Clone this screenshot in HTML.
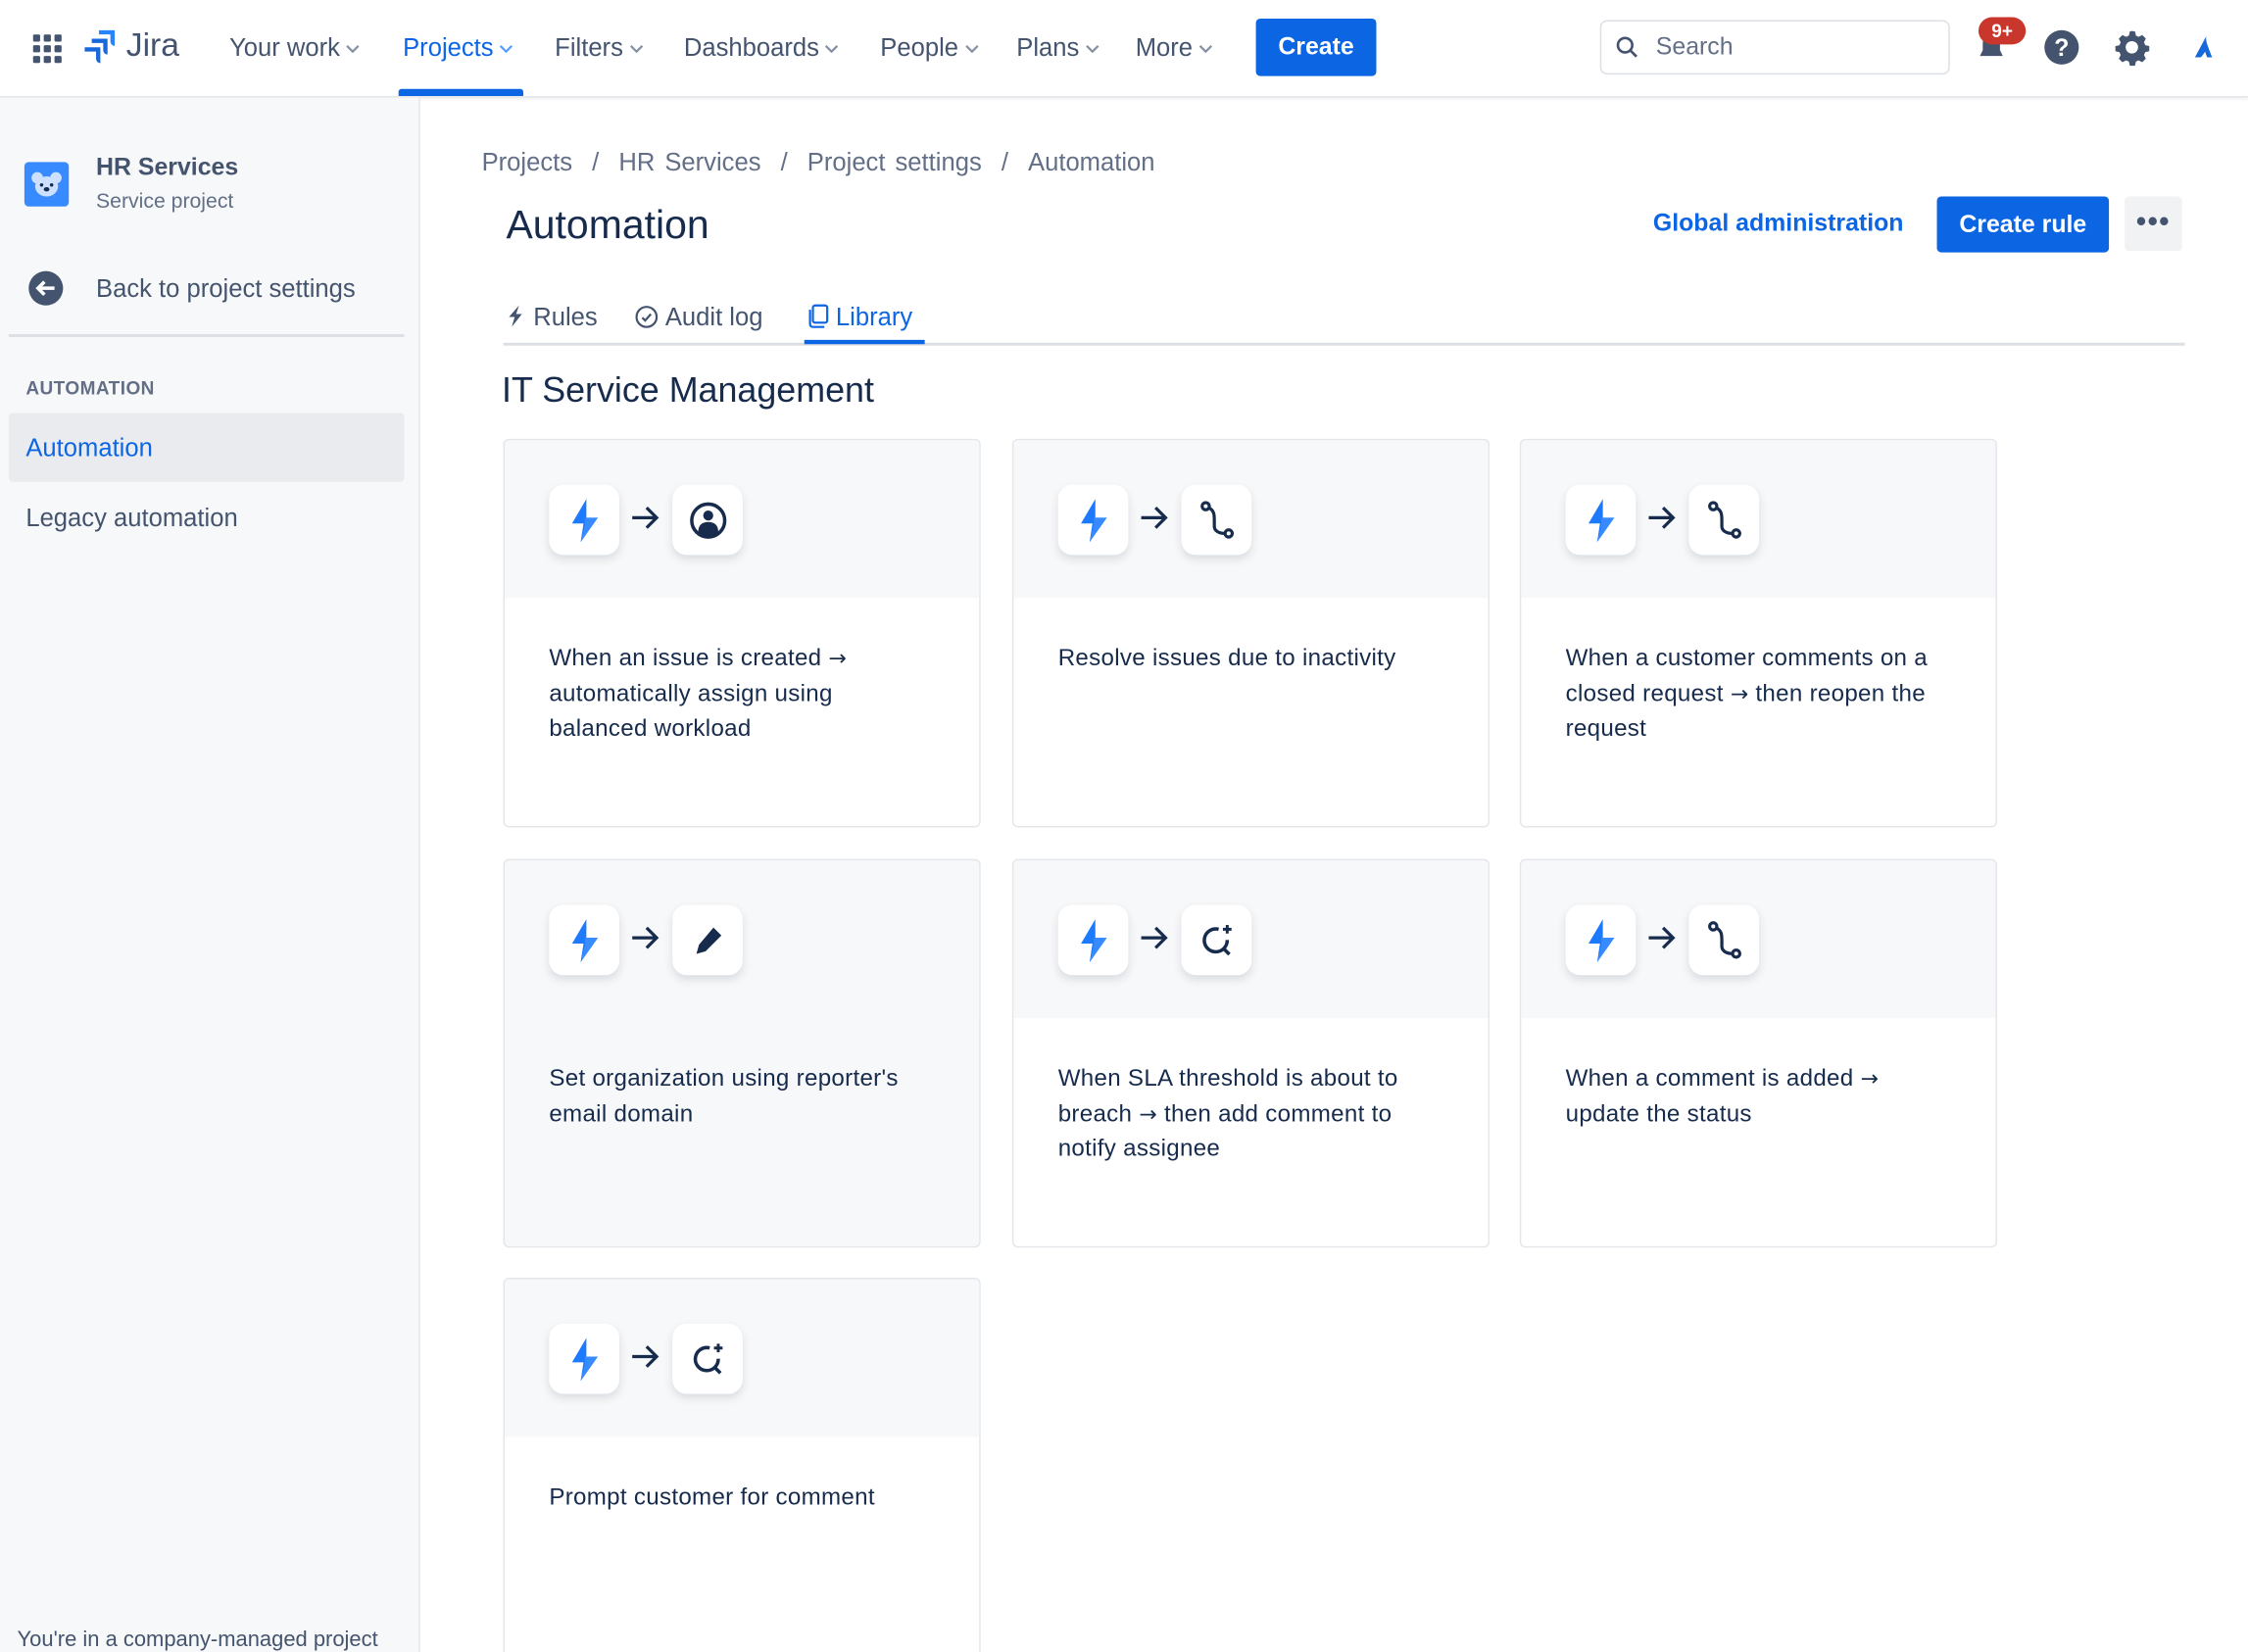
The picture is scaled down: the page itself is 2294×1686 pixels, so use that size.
<!DOCTYPE html>
<html><head><meta charset="utf-8"><style>
html,body{margin:0;padding:0;overflow:hidden;background:#fff}
#w{width:1568px;height:1152px;transform:scale(1.46301,1.46354);transform-origin:0 0;position:relative;font-family:"Liberation Sans",sans-serif;color:#172b4d}
.a{position:absolute}
.nav{top:0;left:0;width:1568px;height:67px;border-bottom:1px solid #e4e6ea;background:#fff;box-shadow:0 1px 2px rgba(9,30,66,.08)}
.ni{position:absolute;top:23px;font-size:17.5px;color:#44546f}
.ni svg{vertical-align:middle;margin-left:4px}
.side{top:68px;left:0;width:292px;height:1084px;background:#f7f8f9;border-right:1px solid #e4e6ea}
.card{position:absolute;width:331px;height:269px;border:1.5px solid #e4e6ea;border-radius:4px;background:#fff;overflow:hidden}
.card .top{height:110px;background:#f7f8f9;position:relative}
.ib{position:absolute;top:31px;width:49px;height:49px;background:#fff;border-radius:10px;box-shadow:0 3px 6px rgba(9,30,66,.12);display:flex;align-items:center;justify-content:center}
.arr{position:absolute;top:45px;left:88px}
.card p{margin:30px 0 0 31px;font-size:16.5px;line-height:24.5px;width:266px;letter-spacing:.2px;color:#172b4d}
.r{font-family:"DejaVu Sans",sans-serif;font-size:15px}
</style></head><body><div id="w">
<div class="a nav">
 <svg class="a" style="left:23px;top:24px" width="20" height="20" viewBox="0 0 20 20" fill="#44546f"><rect x="0" y="0" width="5" height="5" rx="1"/><rect x="7.5" y="0" width="5" height="5" rx="1"/><rect x="15" y="0" width="5" height="5" rx="1"/><rect x="0" y="7.5" width="5" height="5" rx="1"/><rect x="7.5" y="7.5" width="5" height="5" rx="1"/><rect x="15" y="7.5" width="5" height="5" rx="1"/><rect x="0" y="15" width="5" height="5" rx="1"/><rect x="7.5" y="15" width="5" height="5" rx="1"/><rect x="15" y="15" width="5" height="5" rx="1"/></svg>
 <svg class="a" style="left:59px;top:21px" width="22" height="24" viewBox="0 0 22 24"><path d="M10 0h11v11a3 3 0 0 1-3-3V3h-8z" fill="#2684ff"/><path d="M5 6h11v11a3 3 0 0 1-3-3V9H5z" fill="#1868db"/><path d="M0 12h11v11a3 3 0 0 1-3-3v-5H0z" fill="#1868db"/></svg>
 <div class="a" style="left:88px;top:18px;font-size:23px;color:#44546f">Jira</div>
 <div class="ni" style="left:160px">Your work<svg width="10" height="6"><path d="M1 1l4 4 4-4" stroke="#8590a2" fill="none" stroke-width="1.5"/></svg></div>
 <div class="ni" style="left:281px;color:#0c66e4">Projects<svg width="10" height="6"><path d="M1 1l4 4 4-4" stroke="#579dff" fill="none" stroke-width="1.5"/></svg></div>
 <div class="a" style="left:278px;top:62px;width:87px;height:5px;background:#0c66e4;border-radius:2px 2px 0 0"></div>
 <div class="ni" style="left:387px">Filters<svg width="10" height="6"><path d="M1 1l4 4 4-4" stroke="#8590a2" fill="none" stroke-width="1.5"/></svg></div>
 <div class="ni" style="left:477px">Dashboards<svg width="10" height="6"><path d="M1 1l4 4 4-4" stroke="#8590a2" fill="none" stroke-width="1.5"/></svg></div>
 <div class="ni" style="left:614px">People<svg width="10" height="6"><path d="M1 1l4 4 4-4" stroke="#8590a2" fill="none" stroke-width="1.5"/></svg></div>
 <div class="ni" style="left:709px">Plans<svg width="10" height="6"><path d="M1 1l4 4 4-4" stroke="#8590a2" fill="none" stroke-width="1.5"/></svg></div>
 <div class="ni" style="left:792px">More<svg width="10" height="6"><path d="M1 1l4 4 4-4" stroke="#8590a2" fill="none" stroke-width="1.5"/></svg></div>
 <div class="a" style="left:876px;top:13px;width:84px;height:40px;background:#0c66e4;border-radius:3px;color:#fff;font-size:17px;font-weight:bold;text-align:center;line-height:40px">Create</div>
 <div class="a" style="left:1116px;top:14px;width:242px;height:36px;border:1.5px solid #dcdfe4;border-radius:5px"></div>
 <svg class="a" style="left:1127px;top:25px" width="16" height="16"><circle cx="6.5" cy="6.5" r="5" stroke="#44546f" stroke-width="1.8" fill="none"/><path d="M10.5 10.5l4 4" stroke="#44546f" stroke-width="1.8"/></svg>
 <div class="a" style="left:1155px;top:23px;font-size:17px;color:#626f86">Search</div>
 <svg class="a" style="left:1378px;top:22px" width="22" height="24" viewBox="0 0 22 24"><path d="M11 2a6 6 0 0 0-6 6v5l-2 4h16l-2-4V8a6 6 0 0 0-6-6z" fill="#44546f"/></svg>
 <div class="a" style="left:1380px;top:12px;width:33px;height:19px;background:#c9372c;border-radius:10px;color:#fff;font-size:13px;font-weight:bold;text-align:center;line-height:19px">9+</div>
 <svg class="a" style="left:1425px;top:20px" width="26" height="26"><circle cx="13" cy="13" r="12" fill="#44546f"/><text x="13" y="19" font-size="17" font-weight="bold" fill="#fff" text-anchor="middle" font-family="Liberation Sans">?</text></svg>
 <svg class="a" style="left:1474px;top:20px" width="26" height="26" viewBox="0 0 24 24"><path d="M12 1.5l2 .3.6 2.6 1.7.9 2.4-1.2 2.3 2.3-1.2 2.4.8 1.8 2.6.6v3.3l-2.6.6-.8 1.8 1.2 2.4-2.3 2.3-2.4-1.2-1.7.8-.6 2.7h-3.3l-.6-2.7-1.8-.8-2.4 1.2-2.3-2.3 1.2-2.4-.8-1.8-2.6-.6v-3.3l2.6-.6.8-1.8-1.2-2.4 2.3-2.3 2.4 1.2 1.8-.9.6-2.6z" fill="#44546f"/><circle cx="12" cy="12" r="4" fill="#fff"/></svg>
 <svg class="a" style="left:1530px;top:24px" width="18" height="18" viewBox="0 0 18 18"><path d="M9 1c-1 3 1 7 4 15H9.5L8 12c-1 2-2 3-3 4H1z" fill="#1868db"/></svg>
</div>
<div class="a side">
 <div class="a" style="left:17px;top:45px;width:31px;height:31px;background:#388bff;border-radius:3px"><svg width="31" height="31"><circle cx="9" cy="11" r="4" fill="#cce0ff"/><circle cx="22" cy="11" r="4" fill="#cce0ff"/><ellipse cx="15.5" cy="17" rx="8" ry="7" fill="#cce0ff"/><circle cx="12" cy="16" r="1.2" fill="#172b4d"/><circle cx="19" cy="16" r="1.2" fill="#172b4d"/><ellipse cx="15.5" cy="19" rx="2" ry="1.5" fill="#172b4d"/></svg></div>
 <div class="a" style="left:67px;top:39px;font-size:17px;font-weight:bold;color:#44546f">HR Services</div>
 <div class="a" style="left:67px;top:65px;font-size:14.5px;color:#626f86">Service project</div>
 <svg class="a" style="left:19px;top:120px" width="26" height="26"><circle cx="13" cy="13" r="12" fill="#44546f"/><path d="M19 13H8M12 8.5L7.5 13l4.5 4.5" stroke="#fff" stroke-width="2.4" fill="none"/></svg>
 <div class="a" style="left:67px;top:123px;font-size:17.5px;color:#44546f">Back to project settings</div>
 <div class="a" style="left:6px;top:165px;width:276px;height:2px;background:#dcdfe4"></div>
 <div class="a" style="left:18px;top:195px;font-size:13px;font-weight:bold;color:#626f86;letter-spacing:.3px">AUTOMATION</div>
 <div class="a" style="left:6px;top:220px;width:276px;height:48px;background:#e9ebee;border-radius:3px"></div>
 <div class="a" style="left:18px;top:234px;font-size:17.5px;color:#0c66e4">Automation</div>
 <div class="a" style="left:18px;top:283px;font-size:17.5px;color:#44546f">Legacy automation</div>
 <div class="a" style="left:12px;top:1067px;font-size:15px;color:#44546f">You're in a company-managed project</div>
</div>
<div class="a" style="left:336px;top:103px;font-size:17.5px;color:#626f86;word-spacing:2px">Projects &nbsp;/ &nbsp;HR Services &nbsp;/ &nbsp;Project settings &nbsp;/ &nbsp;Automation</div>
<div class="a" style="left:353px;top:141px;font-size:28px;color:#172b4d">Automation</div>
<div class="a" style="left:1153px;top:146px;font-size:17px;font-weight:bold;color:#0c66e4">Global administration</div>
<div class="a" style="left:1351px;top:137px;width:120px;height:39px;background:#0c66e4;border-radius:3px;color:#fff;font-size:17px;font-weight:bold;text-align:center;line-height:39px">Create rule</div>
<div class="a" style="left:1482px;top:137px;width:40px;height:38px;background:#f1f2f4;border-radius:3px;font-size:20px;font-weight:bold;text-align:center;line-height:36px;color:#44546f;letter-spacing:1px">•••</div>
<svg class="a" style="left:354px;top:213px" width="12" height="15"><path d="M8 0L1 8h4l-2 7 7-9H6z" fill="#44546f"/></svg>
<div class="a" style="left:372px;top:211px;font-size:17.5px;color:#44546f">Rules</div>
<svg class="a" style="left:443px;top:213px" width="16" height="16"><circle cx="8" cy="8" r="7" stroke="#44546f" stroke-width="1.5" fill="none"/><path d="M5 8.5l2 2 4-4.5" stroke="#44546f" stroke-width="1.5" fill="none"/></svg>
<div class="a" style="left:464px;top:211px;font-size:17.5px;color:#44546f">Audit log</div>
<svg class="a" style="left:563px;top:212px" width="16" height="17"><rect x="4" y="1" width="10" height="12" rx="1.5" stroke="#0c66e4" stroke-width="1.5" fill="none"/><path d="M2 4v10a2 2 0 0 0 2 2h8" stroke="#0c66e4" stroke-width="1.5" fill="none"/></svg>
<div class="a" style="left:583px;top:211px;font-size:17.5px;color:#0c66e4">Library</div>
<div class="a" style="left:351px;top:239px;width:1173px;height:2px;background:#dcdfe4"></div>
<div class="a" style="left:561px;top:237px;width:84px;height:3px;background:#0c66e4"></div>
<div class="a" style="left:350px;top:259px;font-size:24.5px;color:#172b4d">IT Service Management</div>

<svg width="0" height="0" style="position:absolute"><defs>
<symbol id="bolt" viewBox="0 0 24 30"><path d="M13 0L3 17h8l-2 13 12-17h-8z" fill="#1d7afc"/><path d="M12 13h9L9 30l3-12z" fill="#388bff"/></symbol>
<symbol id="ar" viewBox="0 0 20 18"><path d="M1 9h17M11 2l7 7-7 7" stroke="#172b4d" stroke-width="2.2" fill="none"/></symbol>
<symbol id="br" viewBox="0 0 24 28"><circle cx="4" cy="4" r="2.5" stroke="#172b4d" stroke-width="2.2" fill="none"/><circle cx="20" cy="23" r="2.5" stroke="#172b4d" stroke-width="2.2" fill="none"/><path d="M6 5c4 2 4 5 4 9v4c0 3 3 5 7.5 5" stroke="#172b4d" stroke-width="2.2" fill="none"/></symbol>
<symbol id="us" viewBox="0 0 26 26"><circle cx="13" cy="13" r="11.5" stroke="#172b4d" stroke-width="2.4" fill="none"/><circle cx="13" cy="9.5" r="3.5" fill="#172b4d"/><path d="M6 21c0-5 3-7 7-7s7 2 7 7a10 10 0 0 1-14 0z" fill="#172b4d"/></symbol>
<symbol id="pen" viewBox="0 0 24 24"><path d="M16 2l6 6-12 12-7 2 2-7z" fill="#172b4d"/></symbol>
<symbol id="rf" viewBox="0 0 26 26"><path d="M20 12.5A8 8 0 1 1 14 5" stroke="#172b4d" stroke-width="2.4" fill="none"/><path d="M18 19l3.5 3.5" stroke="#172b4d" stroke-width="2.4"/><path d="M20 2v6M17 5h6" stroke="#172b4d" stroke-width="2"/></symbol>
</defs></svg>

<div class="card" style="left:351px;top:306px"><div class="top"><div class="ib" style="left:31px"><svg width="24" height="30"><use href="#bolt"/></svg></div><svg class="arr" width="20" height="18"><use href="#ar"/></svg><div class="ib" style="left:117px"><svg width="26" height="26"><use href="#us"/></svg></div></div><p>When an issue is created <span class="r">→</span> automatically assign using balanced workload</p></div>
<div class="card" style="left:706px;top:306px"><div class="top"><div class="ib" style="left:31px"><svg width="24" height="30"><use href="#bolt"/></svg></div><svg class="arr" width="20" height="18"><use href="#ar"/></svg><div class="ib" style="left:117px"><svg width="24" height="28"><use href="#br"/></svg></div></div><p>Resolve issues due to inactivity</p></div>
<div class="card" style="left:1060px;top:306px"><div class="top"><div class="ib" style="left:31px"><svg width="24" height="30"><use href="#bolt"/></svg></div><svg class="arr" width="20" height="18"><use href="#ar"/></svg><div class="ib" style="left:117px"><svg width="24" height="28"><use href="#br"/></svg></div></div><p>When a customer comments on a closed request <span class="r">→</span> then reopen the request</p></div>
<div class="card" style="left:351px;top:599px;background:#f7f8f9"><div class="top"><div class="ib" style="left:31px"><svg width="24" height="30"><use href="#bolt"/></svg></div><svg class="arr" width="20" height="18"><use href="#ar"/></svg><div class="ib" style="left:117px"><svg width="22" height="22"><use href="#pen"/></svg></div></div><p>Set organization using reporter's email domain</p></div>
<div class="card" style="left:706px;top:599px"><div class="top"><div class="ib" style="left:31px"><svg width="24" height="30"><use href="#bolt"/></svg></div><svg class="arr" width="20" height="18"><use href="#ar"/></svg><div class="ib" style="left:117px"><svg width="26" height="26"><use href="#rf"/></svg></div></div><p>When SLA threshold is about to breach <span class="r">→</span> then add comment to notify assignee</p></div>
<div class="card" style="left:1060px;top:599px"><div class="top"><div class="ib" style="left:31px"><svg width="24" height="30"><use href="#bolt"/></svg></div><svg class="arr" width="20" height="18"><use href="#ar"/></svg><div class="ib" style="left:117px"><svg width="24" height="28"><use href="#br"/></svg></div></div><p>When a comment is added <span class="r">→</span> update the status</p></div>
<div class="card" style="left:351px;top:891px"><div class="top"><div class="ib" style="left:31px"><svg width="24" height="30"><use href="#bolt"/></svg></div><svg class="arr" width="20" height="18"><use href="#ar"/></svg><div class="ib" style="left:117px"><svg width="26" height="26"><use href="#rf"/></svg></div></div><p>Prompt customer for comment</p></div>
</div></body></html>
